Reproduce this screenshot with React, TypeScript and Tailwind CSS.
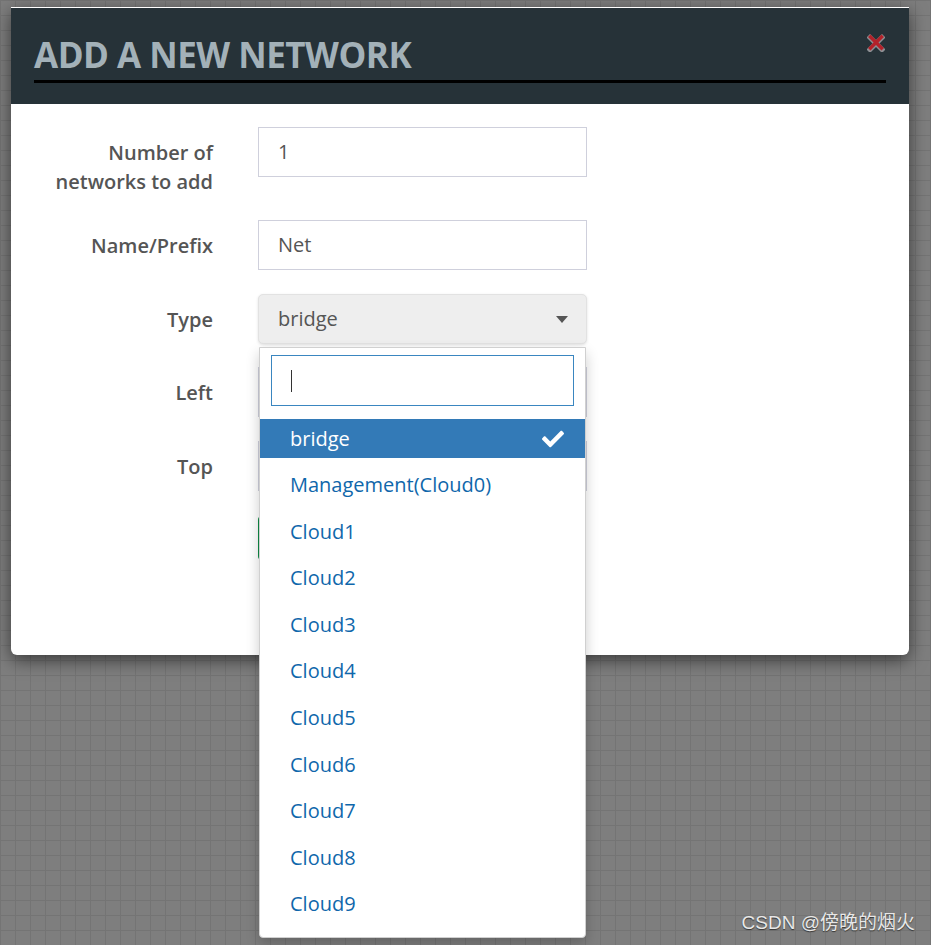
import React from "react";
import { FaCheck } from "react-icons/fa";

const items = [
  "Management(Cloud0)",
  "Cloud1",
  "Cloud2",
  "Cloud3",
  "Cloud4",
  "Cloud5",
  "Cloud6",
  "Cloud7",
  "Cloud8",
  "Cloud9",
];

function Label({ children }: { children: React.ReactNode }) {
  return (
    <div className="w-[180px] shrink-0 pt-[11px] text-right text-[20px] font-semibold leading-[29px] text-[#555]">
      {children}
    </div>
  );
}

function TextBox({ value }: { value: string }) {
  return (
    <div className="flex h-[50px] w-[329px] items-center border border-[#cfd0dc] bg-white pl-[19px] text-[20px] text-[#555]">
      {value}
    </div>
  );
}

export default function App() {
  return (
    <div className="relative h-[945px] w-full overflow-hidden bg-[#7e7e7e] bg-[linear-gradient(to_right,#747474_1px,transparent_1px),linear-gradient(to_bottom,#747474_1px,transparent_1px)] bg-size-[15px_15px] font-['Open_Sans','Noto_Sans',sans-serif]">
      <div className="pl-[11px] pt-[7px]">
        <div className="relative h-[648px] w-[898px] rounded-b-[6px] border-t border-white bg-white shadow-[0_5px_18px_rgba(0,0,0,0.55)]">
          {/* header */}
          <div className="relative h-[96px] bg-[#263238] px-[23px] pt-[26px]">
            <div className="text-[35px] font-bold leading-[42px] tracking-[-0.5px] text-[#a3b1b8]">
              ADD A NEW NETWORK
            </div>
            <div className="mt-[4px] h-[3px] w-[852px] bg-black" />
            <div className="absolute right-[24px] top-[26px]">
              <svg width="18" height="18" viewBox="0 0 18 18">
                <g strokeLinecap="square">
                  <line x1="3" y1="3.5" x2="15" y2="15.5" stroke="#8d8f93" strokeWidth="5" />
                  <line x1="15" y1="3.5" x2="3" y2="15.5" stroke="#8d8f93" strokeWidth="5" />
                  <line x1="3.5" y1="3" x2="14.5" y2="14" stroke="#b3222a" strokeWidth="3.5" />
                  <line x1="14.5" y1="3" x2="3.5" y2="14" stroke="#b3222a" strokeWidth="3.5" />
                </g>
              </svg>
            </div>
          </div>

          {/* body */}
          <div className="flex flex-col pl-[22px] pt-[23px]">
            <div className="mb-[24px] flex gap-[45px]">
              <Label>
                Number of
                <br />
                networks to add
              </Label>
              <TextBox value="1" />
            </div>
            <div className="mb-[24px] flex gap-[45px]">
              <Label>Name/Prefix</Label>
              <TextBox value="Net" />
            </div>
            <div className="mb-[23px] flex gap-[45px]">
              <Label>Type</Label>
              <div className="relative">
                <div className="flex h-[50px] w-[329px] items-center justify-between rounded-[5px] border border-[#e2e2e2] bg-[#eeeeee] pl-[19px] pr-[18px] text-[20px] text-[#555] shadow-[0_1px_3px_rgba(0,0,0,0.12)]">
                  <span>bridge</span>
                  <svg width="12" height="7" viewBox="0 0 12 7">
                    <path d="M0 0 L12 0 L6 7 Z" fill="#555" />
                  </svg>
                </div>

                {/* dropdown */}
                <div className="absolute left-[1px] top-[53px] z-10 w-[327px] rounded-b-[4px] border border-[#d0d0d0] bg-white pb-[13px] pt-[7px] shadow-[0_6px_14px_rgba(0,0,0,0.2)]">
                  <div className="mx-[11px] flex h-[51px] items-center border border-[#3a86c0] pl-[19px]">
                    <div className="h-[22px] w-[1px] bg-[#333]" />
                  </div>
                  <div className="mt-[13px] flex flex-col gap-[7.6px]">
                    <div className="flex h-[39px] items-center justify-between bg-[#337ab7] pl-[30px] pr-[21px] text-[20px] text-white">
                      <span>bridge</span>
                      <FaCheck size={22} color="#fff" />
                    </div>
                    {items.map((it) => (
                      <div
                        key={it}
                        className="flex h-[39px] items-center pl-[30px] text-[20px] text-[#0f67ab]"
                      >
                        {it}
                      </div>
                    ))}
                  </div>
                </div>
              </div>
            </div>
            <div className="mb-[24px] flex gap-[45px]">
              <Label>Left</Label>
              <TextBox value="" />
            </div>
            <div className="mb-[25px] flex gap-[45px]">
              <Label>Top</Label>
              <TextBox value="" />
            </div>
            <div className="flex gap-[45px]">
              <div className="w-[180px] shrink-0" />
              <div className="h-[44px] w-[90px] rounded-[4px] bg-[#0e8a45]" />
            </div>
          </div>
        </div>
      </div>

      <div className="absolute bottom-[8px] right-[16px] font-['Liberation_Sans','Noto_Sans_CJK_SC',sans-serif] text-[19px] text-[#e8e8e8] [text-shadow:0_1px_1px_rgba(0,0,0,0.6)]">
        CSDN @傍晚的烟火
      </div>
    </div>
  );
}
